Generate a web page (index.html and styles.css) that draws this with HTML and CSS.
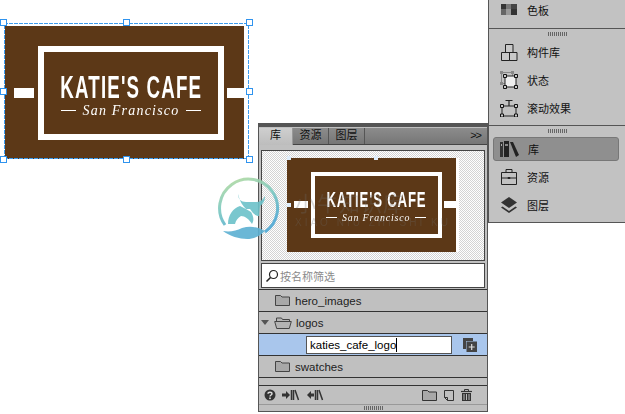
FILE: index.html
```html
<!DOCTYPE html>
<html lang="zh-CN">
<head>
    <meta charset="UTF-8">
    <meta name="viewport" content="width=device-width, initial-scale=1.0">
    <title>库面板</title>
    <link rel="stylesheet" href="styles.css">
</head>
<body>
    <div class="stage">

        <!-- Logo on the canvas -->
        <div class="canvas-logo">
            <div class="logo">
                <span class="logo-bar bar-left"></span>
                <div class="logo-frame">
                    <div class="logo-title">KATIE'S CAFE</div>
                    <div class="logo-sub"><i></i><span>San Francisco</span><i></i></div>
                </div>
                <span class="logo-bar bar-right"></span>
            </div>
            <div class="select-box"></div>
            <span class="handle h-tl"></span>
            <span class="handle h-tc"></span>
            <span class="handle h-tr"></span>
            <span class="handle h-ml"></span>
            <span class="handle h-mr"></span>
            <span class="handle h-bl"></span>
            <span class="handle h-bc"></span>
            <span class="handle h-br"></span>
        </div>

        <!-- Library panel -->
        <div class="panel">
            <div class="tabs">
                <div class="tab active">库</div>
                <div class="tab">资源</div>
                <div class="tab">图层</div>
                <div class="tabs-more">&gt;&gt;</div>
            </div>

            <div class="preview">
                <div class="thumb">
                    <div class="logo logo-small">
                        <span class="logo-bar bar-left"></span>
                        <div class="logo-frame">
                            <div class="logo-title">KATIE'S CAFE</div>
                            <div class="logo-sub"><i></i><span>San Francisco</span><i></i></div>
                        </div>
                        <span class="logo-bar bar-right"></span>
                    </div>
                    <span class="mini-handle m-tl"></span>
                    <span class="mini-handle m-tc"></span>
                    <span class="mini-handle m-ml"></span>
                </div>
            </div>

            <div class="search">
                <svg width="14" height="14" viewBox="0 0 14 14"><circle cx="8.500" cy="5.500" r="4" fill="none" stroke="#222" stroke-width="1.200"/><path d="M5.500 8.500L1.500 12.500" stroke="#222" stroke-width="1.600"/></svg>
                <span>按名称筛选</span>
            </div>

            <div class="tree">
                <div class="row">
                    <svg class="folder" width="15" height="11" viewBox="0 0 15 11"><path d="M.5 10.500V.5h5l1.500 1.500h7.500v8.500z" fill="#a8a8a8" stroke="#444"/></svg>
                    <span>hero_images</span>
                </div>
                <div class="row open">
                    <span class="caret"></span>
                    <svg class="folder" width="18" height="12" viewBox="0 0 18 12"><path d="M2.500 4V1h5l1 1.500h7V4M.7 4.500h16.600l-2 7H2.700z" fill="#b4b4b4" stroke="#444"/></svg>
                    <span>logos</span>
                </div>
                <div class="row selected">
                    <div class="rename">katies_cafe_logo<span class="cursor"></span></div>
                    <svg width="14" height="14" viewBox="0 0 14 14"><path d="M0 0h10v3H3v8H0z" fill="#444"/><rect x="3.500" y="3.500" width="10.500" height="10.500" fill="#444"/><path d="M8.700 6v6M5.700 9h6" stroke="#ddd" stroke-width="1.200"/></svg>
                </div>
                <div class="row">
                    <svg class="folder" width="15" height="11" viewBox="0 0 15 11"><path d="M.5 10.500V.5h5l1.500 1.500h7.500v8.500z" fill="#a8a8a8" stroke="#444"/></svg>
                    <span>swatches</span>
                </div>
            </div>

            <div class="panel-foot">
                <div class="foot-left">
                    <svg width="12" height="12" viewBox="0 0 12 12"><circle cx="6" cy="6" r="5.500" fill="#333"/><path d="M4 4.700C4 2.800 8 2.800 8 4.700 8 6 6 6 6 7.500" fill="none" stroke="#ddd" stroke-width="1.400"/><rect x="5.200" y="8.500" width="1.600" height="1.600" fill="#ddd"/></svg>
                    <svg width="18" height="12" viewBox="0 0 18 12"><path d="M0 6h4" stroke="#333" stroke-width="3"/><path d="M4 2l4 4-4 4z" fill="#333"/><path d="M9.500 1v10M11.500 1v10" stroke="#333" stroke-width="1.500"/><path d="M13 1l3.500 10" stroke="#333" stroke-width="1.500"/></svg>
                    <svg width="18" height="12" viewBox="0 0 18 12"><path d="M4 6h4" stroke="#333" stroke-width="3"/><path d="M5 2L1 6l4 4z" fill="#333"/><path d="M9.500 1v10M11.500 1v10" stroke="#333" stroke-width="1.500"/><path d="M13 1l3.500 10" stroke="#333" stroke-width="1.500"/></svg>
                </div>
                <div class="foot-right">
                    <svg width="15" height="11" viewBox="0 0 15 11"><path d="M.5 10.500V.5h5l1.500 1.500h7.500v8.500z" fill="#a8a8a8" stroke="#333"/></svg>
                    <svg width="10" height="11" viewBox="0 0 10 11"><path d="M.5.500h9v10h-6l-3-3z" fill="none" stroke="#333"/><path d="M.5 7.500h3v3" fill="none" stroke="#333"/></svg>
                    <svg width="11" height="12" viewBox="0 0 11 12"><path d="M0 2.500h11" stroke="#333" stroke-width="1.200"/><path d="M3.500 2V.500h4V2" fill="none" stroke="#333"/><path d="M1 4h9v8H1z" fill="#333"/><path d="M3 5v6M5.500 5v6M8 5v6" stroke="#bbb"/></svg>
                </div>
            </div>
            <div class="grip-row"><span class="grip"></span></div>
        </div>

        <!-- Side dock -->
        <div class="dock">
            <div class="dock-row">
                <svg width="18" height="18" viewBox="0 0 18 18"><rect x="1" y="3" width="5" height="5" fill="#333"/><rect x="6" y="3" width="5" height="5" fill="#777"/><rect x="11" y="3" width="6" height="5" fill="#444"/><rect x="1" y="8" width="5" height="6" fill="#666"/><rect x="6" y="8" width="5" height="6" fill="#999"/><rect x="11" y="8" width="6" height="6" fill="#333"/></svg>
                <span>色板</span>
            </div>
            <div class="dock-sep"><span class="grip"></span></div>
            <div class="dock-row">
                <svg width="18" height="18" viewBox="0 0 18 18"><path d="M5.500 1.500h7.500v8H5.500zM1.500 9.500h8v8h-8zM9.500 9.500h7.500v8H9.500z" fill="#c8c8c8" stroke="#222"/></svg>
                <span>构件库</span>
            </div>
            <div class="dock-row">
                <svg width="18" height="18" viewBox="0 0 18 18"><path d="M1.500 1.500h11v11h-11z" fill="none" stroke="#888"/><rect x="0" y="0" width="3" height="3" fill="#888"/><rect x="11" y="0" width="3" height="3" fill="#888"/><rect x="0" y="11" width="3" height="3" fill="#888"/><path d="M5 5h11v11H5z" fill="#eee" stroke="#222"/><path d="M3.500 3.500h3v3h-3zM14.500 3.500h3v3h-3zM3.500 14.500h3v3h-3zM14.500 14.500h3v3h-3z" fill="#ccc" stroke="#111"/></svg>
                <span>状态</span>
            </div>
            <div class="dock-row">
                <svg width="18" height="18" viewBox="0 0 18 18"><path d="M9 1.500V7M5.500 1.500h7" stroke="#222" stroke-width="1.200"/><path d="M2 7h14v10H2z" fill="none" stroke="#222"/><path d="M.5 5.500h3v3h-3zM14.500 5.500h3v3h-3zM.5 15h3v3h-3zM14.500 15h3v3h-3z" fill="#ccc" stroke="#111"/></svg>
                <span>滚动效果</span>
            </div>
            <div class="dock-sep second"><span class="grip"></span></div>
            <div class="dock-row current">
                <svg width="20" height="18" viewBox="0 0 20 18"><path d="M0 2h3v15H0z" fill="#333"/><path d="M4 1h5v16H4z" fill="#222"/><path d="M5 4h3v2H5z" fill="#888"/><path d="M10 2l3 0 6 13-3 2z" fill="#222"/><path d="M1 4h1v2H1z" fill="#aaa"/></svg>
                <span>库</span>
            </div>
            <div class="dock-row">
                <svg width="18" height="18" viewBox="0 0 18 18"><path d="M6 4V1.500h6V4" fill="none" stroke="#222"/><path d="M1.500 4.500h15v12h-15z" fill="none" stroke="#222"/><path d="M1.500 10h6M10.500 10h6" stroke="#222"/><rect x="7.500" y="9" width="3" height="2" fill="#222"/></svg>
                <span>资源</span>
            </div>
            <div class="dock-row">
                <svg width="18" height="18" viewBox="0 0 18 18"><path d="M9 1l8 5.500-8 5.500-8-5.500z" fill="#333"/><path d="M2.500 10.500L1 11.500 9 17l8-5.500-1.500-1L9 15z" fill="#333"/></svg>
                <span>图层</span>
            </div>
        </div>

        <!-- Watermark over everything -->
        <div class="watermark">
            <svg width="70" height="70" viewBox="0 0 70 70">
                <defs>
                    <linearGradient id="ring" x1="0" y1="0" x2="0.4" y2="1">
                        <stop offset="0" stop-color="#b9dc9c"/>
                        <stop offset="0.5" stop-color="#7cc9c0"/>
                        <stop offset="1" stop-color="#4fa9d4"/>
                    </linearGradient>
                </defs>
                <path d="M12 52A29 29 0 1 1 52 59" fill="none" stroke="url(#ring)" stroke-width="3"/>
                <path d="M10 58c7 1 13 0 19-3 7-2 14-2 23 3-5 5-11 8-18 8-7 0-18-3-24-8z" fill="#5cb0d2"/>
                <path d="M25 21c0 5 3 8 8 8h10c4 0 7-2 9-6 0 5-2 8-5 10l-1 10c-2 0-4-1-6-3l-3-4h-4c-3-3-6-7-8-15z" fill="#6cc2c9"/>
                <path d="M27 33c-7 2-12 9-12 18h7c1-4 3-6 6-8 4 0 8 3 11 8 2-3 2-7-1-12l-5-3z" fill="#6cc2c9"/>
            </svg>
            <div class="wm-text">
                <div class="wm-cn">小牛知识库</div>
                <div class="wm-en">XIAO NIU ZHI SHI KU</div>
            </div>
        </div>
    </div>
</body>
</html>
```

FILE: styles.css
```css
html, body {
    margin: 0;
    padding: 0;
    background: #fff;
}
.stage {
    position: relative;
    width: 625px;
    height: 414px;
    overflow: hidden;
    font-family: "Liberation Sans", "Noto Sans CJK SC", sans-serif;
    color: #111;
}

/* Logo */
.logo {
    display: flex;
    align-items: center;
    width: 239px;
    height: 133px;
    box-sizing: border-box;
    padding-left: 9px;
    background: #5c3817;
    filter: blur(0.35px);
}
.logo-bar {
    display: block;
    height: 10px;
    background: #fff;
}
.bar-left {
    width: 20px;
    margin-right: 4px;
}
.bar-right {
    width: 17px;
    margin-left: 3px;
}
.logo-frame {
    display: flex;
    flex-direction: column;
    align-items: center;
    justify-content: center;
    box-sizing: border-box;
    width: 186px;
    height: 94px;
    padding-top: 7px;
    border: 6px solid #fff;
    color: #fff;
}
.logo-title {
    font-weight: 700;
    font-size: 32px;
    line-height: 24px;
    letter-spacing: 2px;
    white-space: nowrap;
    transform: scaleX(0.585);
}
.logo-sub {
    display: flex;
    align-items: center;
    gap: 7px;
    margin-top: 5px;
    font-family: "Liberation Serif", serif;
    font-style: italic;
    font-size: 14px;
    line-height: 14px;
    letter-spacing: 1.2px;
    white-space: nowrap;
}
.logo-sub i {
    display: block;
    width: 15px;
    height: 1px;
    background: #fff;
}
.logo-small {
    zoom: 0.705;
}

/* Selection on canvas */
.canvas-logo {
    position: absolute;
    left: 5px;
    top: 26px;
}
.select-box {
    position: absolute;
    left: -1px;
    top: -3px;
    width: 245px;
    height: 136px;
    background:
        repeating-linear-gradient(90deg, #3c9cf0 0 4px, transparent 4px 5px) top / 100% 1px no-repeat,
        repeating-linear-gradient(90deg, #3c9cf0 0 4px, transparent 4px 5px) bottom / 100% 1px no-repeat,
        repeating-linear-gradient(0deg, #3c9cf0 0 4px, transparent 4px 5px) left / 1px 100% no-repeat,
        repeating-linear-gradient(0deg, #3c9cf0 0 4px, transparent 4px 5px) right / 1px 100% no-repeat;
}
.handle {
    position: absolute;
    width: 5px;
    height: 5px;
    background: #fff;
    border: 1px solid #2f93ee;
}
.h-tl { left: -5px; top: -7px; }
.h-tc { left: 118px; top: -7px; }
.h-tr { left: 241px; top: -7px; }
.h-ml { left: -5px; top: 62px; }
.h-mr { left: 241px; top: 62px; }
.h-bl { left: -5px; top: 130px; }
.h-bc { left: 118px; top: 130px; }
.h-br { left: 241px; top: 130px; }

/* Library panel */
.panel {
    position: absolute;
    left: 258px;
    top: 123px;
    width: 230px;
    height: 289px;
    box-sizing: border-box;
    display: flex;
    flex-direction: column;
    background: #c0c0c0;
    border: 1px solid #555;
    border-top: 4px solid #555;
    font-size: 11px;
}
.tabs {
    display: flex;
    flex: none;
    height: 17px;
    margin-top: 1px;
    background: linear-gradient(#8c8c8c, #767676);
    border-bottom: 1px solid #444;
    box-sizing: border-box;
}
.tab {
    width: 36px;
    line-height: 15px;
    text-align: center;
    border-right: 1px solid #555;
    box-sizing: border-box;
    color: #111;
}
.tab.active {
    width: 34px;
    height: 17px;
    background: linear-gradient(#cfcfcf, #bdbdbd);
    border-right: 1px solid #999;
}
.tabs-more {
    margin-left: auto;
    padding-right: 6px;
    line-height: 15px;
    color: #111;
    letter-spacing: -1px;
}
.preview {
    flex: none;
    display: flex;
    justify-content: center;
    height: 111px;
    margin: 5px 2px 0;
    box-sizing: border-box;
    border: 1px solid #444;
    background: repeating-conic-gradient(#d4d4d4 0 25%, #fff 0 50%) 0 0 / 2px 2px;
}
.thumb {
    position: relative;
    margin: 7px 0 0 0;
    padding-right: 3px;
    align-self: flex-start;
    background: #fff;
}
.mini-handle {
    position: absolute;
    width: 4px;
    height: 4px;
    background: #dfeefc;
}
.m-tl { left: 0; top: -2px; }
.m-tc { left: 87px; top: -2px; }
.m-ml { left: 0; top: 45px; }

.search {
    flex: none;
    display: flex;
    align-items: center;
    gap: 1px;
    height: 25px;
    margin: 2px 2px 0;
    padding-left: 3px;
    box-sizing: border-box;
    background: #fff;
    border: 1px solid #444;
    color: #8a8a8a;
    font-size: 11px;
}
.tree {
    flex: none;
    margin-top: 1px;
    border-top: 1px solid #333;
}
.row {
    display: flex;
    align-items: center;
    height: 22px;
    box-sizing: border-box;
    padding-left: 16px;
    border-bottom: 1px solid #333;
    font-size: 11.5px;
    color: #222;
    gap: 5px;
}
.row.open {
    padding-left: 2px;
    gap: 4px;
}
.caret {
    width: 0;
    height: 0;
    margin-right: 1px;
    border-left: 4px solid transparent;
    border-right: 4px solid transparent;
    border-top: 5px solid #555;
}
.row.selected {
    padding-left: 47px;
    gap: 11px;
    background: #a9c6ec;
}
.rename {
    display: flex;
    align-items: center;
    width: 146px;
    height: 18px;
    box-sizing: border-box;
    padding-left: 3px;
    background: #fff;
    border: 1px solid #555;
    color: #000;
    font-size: 11.5px;
}
.cursor {
    width: 1px;
    height: 14px;
    background: #000;
}
.panel-foot {
    flex: none;
    display: flex;
    align-items: center;
    justify-content: space-between;
    height: 19px;
    margin-top: 7px;
    padding: 0 15px 0 5px;
    border-top: 1px solid #333;
    box-sizing: border-box;
}
.foot-left, .foot-right {
    display: flex;
    align-items: center;
    gap: 6px;
}
.foot-right {
    gap: 7px;
}
.grip-row {
    flex: 1;
    display: flex;
    align-items: center;
    justify-content: center;
    border-top: 1px solid #999;
}
.grip {
    display: block;
    width: 19px;
    height: 4px;
    background: repeating-linear-gradient(90deg, #666 0 1px, transparent 1px 2px);
}

/* Side dock */
.dock {
    position: absolute;
    left: 488px;
    top: -4px;
    width: 137px;
    height: 227px;
    box-sizing: border-box;
    background: #c2c2c2;
    border-left: 1px solid #555;
    border-bottom: 1px solid #555;
    font-size: 11px;
}
.dock-row {
    display: flex;
    align-items: center;
    height: 28px;
    padding-left: 11px;
    gap: 9px;
    box-sizing: border-box;
    color: #111;
}
.dock-row svg {
    flex: none;
}
.dock-sep {
    display: flex;
    align-items: center;
    justify-content: center;
    height: 10px;
    margin-top: 4px;
    border-top: 1px solid #555;
    box-sizing: border-box;
}
.dock-sep.second {
    margin-top: 3px;
    margin-bottom: 2px;
}
.dock-row.current {
    width: 126px;
    height: 24px;
    margin: 0 0 2px 4px;
    padding-left: 6px;
    gap: 8px;
    background: #8f8f8f;
    border: 1px solid #777;
    border-radius: 3px;
}

/* Watermark */
.watermark {
    position: absolute;
    left: 213px;
    top: 173px;
    display: flex;
    align-items: center;
    gap: 12px;
    opacity: 0.9;
    pointer-events: none;
}
.wm-text {
    color: rgba(110, 110, 110, 0.3);
    margin-top: 4px;
}
.wm-cn {
    font-size: 21px;
    line-height: 26px;
    letter-spacing: 1px;
}
.wm-en {
    font-size: 10px;
    line-height: 12px;
    letter-spacing: 3px;
    white-space: nowrap;
}
```
